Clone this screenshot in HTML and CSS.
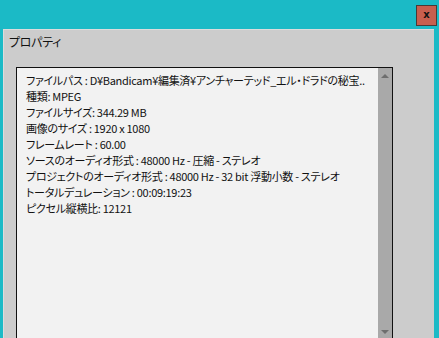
FILE: index.html
```html
<!DOCTYPE html>
<html lang="ja">
<head>
    <meta charset="UTF-8">
    <title>プロパティ</title>
    <link rel="stylesheet" href="styles.css">
</head>
<body>
    <!-- Title strip with close button -->
    <div class="topbar">
        <div class="close-btn">x</div>
    </div>

    <!-- Properties panel -->
    <div class="panel">
        <div class="panel-title">プロパティ</div>
        <div class="listbox">
            <div class="list-content">
                <div class="row">ファイルパス : D¥Bandicam¥編集済¥アンチャーテッド_エル・ドラドの秘宝..</div>
                <div class="row">種類: MPEG</div>
                <div class="row">ファイルサイズ: 344.29 MB</div>
                <div class="row">画像のサイズ : 1920 x 1080</div>
                <div class="row">フレームレート : 60.00</div>
                <div class="row">ソースのオーディオ形式 : 48000 Hz - 圧縮 - ステレオ</div>
                <div class="row">プロジェクトのオーディオ形式 : 48000 Hz - 32 bit 浮動小数 - ステレオ</div>
                <div class="row">トータルデュレーション : 00:09:19:23</div>
                <div class="row">ピクセル縦横比: 12121</div>
            </div>
            <div class="scrollbar">
                <span class="arrow up"></span>
                <span class="arrow down"></span>
            </div>
        </div>
    </div>
</body>
</html>
```

FILE: styles.css
```css
body {
    margin: 0;
    width: 439px;
    height: 338px;
    overflow: hidden;
    background-color: #1bbac6;
    font-family: "Noto Sans CJK JP", "DejaVu Sans", sans-serif;
    font-size: 11px;
    font-feature-settings: "palt";
    letter-spacing: -0.3px;
    color: #111;
}
/* Top strip */
.topbar {
    height: 29px;
    display: flex;
    justify-content: flex-end;
    align-items: flex-start;
    padding-right: 2px;
    box-sizing: border-box;
}
.close-btn {
    width: 19px;
    height: 19px;
    margin-top: 5px;
    background-color: #c85f4e;
    border: 1px solid #4a3a36;
    font-family: "DejaVu Sans", sans-serif;
    font-weight: bold;
    font-size: 10px;
    letter-spacing: 0;
    line-height: 17px;
    text-align: center;
    color: #111;
}
/* Panel */
.panel {
    margin-left: 3px;
    width: 431px;
    height: 309px;
    background-color: #cccccc;
    border-top: 1px solid #dcdcdc;
    border-left: 1px solid #dcdcdc;
    box-sizing: border-box;
}
.panel-title {
    height: 37px;
    padding: 5px 0 0 5px;
    box-sizing: border-box;
    line-height: 14px;
    font-size: 12px;
}
/* List box */
.listbox {
    width: 377px;
    height: 272px;
    margin-left: 12px;
    display: flex;
    background-color: #f2f2f2;
    border: 1px solid #111;
    border-bottom: none;
    box-sizing: border-box;
}
.list-content {
    flex: 1;
    min-width: 0;
    overflow: hidden;
    padding: 4px 0 0 9px;
}
.row {
    height: 16px;
    line-height: 16px;
    white-space: nowrap;
}
.scrollbar {
    width: 14px;
    flex-shrink: 0;
    background-color: #a9a9a9;
    display: flex;
    flex-direction: column;
    justify-content: space-between;
    align-items: center;
    padding: 6px 0 5px;
}
.arrow {
    width: 0;
    height: 0;
    border-left: 4px solid transparent;
    border-right: 4px solid transparent;
}
.arrow.up {
    border-bottom: 4px solid #6e6e6e;
}
.arrow.down {
    border-top: 4px solid #6e6e6e;
}
```
